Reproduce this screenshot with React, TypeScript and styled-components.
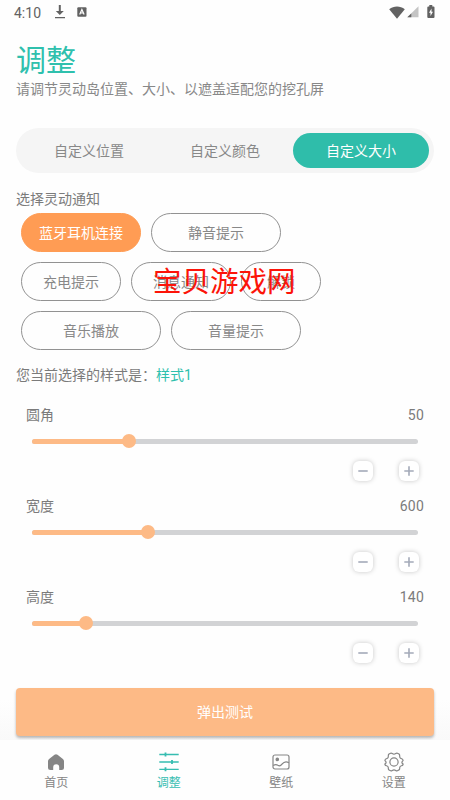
import React from "react";
import styled, { createGlobalStyle } from "styled-components";

const GlobalStyle = createGlobalStyle`
  * { box-sizing: border-box; }
  body { margin: 0; background: #fefefe; }
  button { font: inherit; border: 0; padding: 0; margin: 0; }
`;

const Screen = styled.main`
  width: 450px;
  height: 800px;
  overflow: hidden;
  display: flex;
  flex-direction: column;
  background: linear-gradient(#fefefe 700px, #f9f9f9 740px);
  color: #888;
  font: 14px/20px Roboto, "Noto Sans CJK SC", sans-serif;
`;

const StatusBar = styled.header`
  height: 26px;
  flex: none;
  display: flex;
  align-items: center;
  padding: 0 15px 0 14px;
  color: #626262;
`;

const Clock = styled.span`
  width: 40px;
  font-size: 14px;
  line-height: 26px;
`;

const StatusIcons = styled.div<{ $end?: boolean }>`
  display: flex;
  align-items: center;
  gap: ${(p) => (p.$end ? "2px" : "11px")};
  padding-bottom: 2px;
  margin-left: ${(p) => (p.$end ? "auto" : "0")};
`;

const BatterySlot = styled.span`
  display: flex;
  margin-left: 6px;
`;

const Content = styled.section`
  flex: 1;
  display: flex;
  flex-direction: column;
  padding: 0 16px;
`;

const Title = styled.h1`
  margin: 15px 0 0;
  height: 38px;
  color: #2fc0ad;
  font-size: 30px;
  line-height: 40px;
  font-weight: 400;
`;

const Subtitle = styled.p`
  margin: 0;
  height: 20px;
  white-space: nowrap;
`;

const Tabs = styled.div`
  display: grid;
  grid-template-columns: repeat(3, 1fr);
  height: 45px;
  margin-top: 29px;
  padding: 5px;
  border-radius: 23px;
  background: #f5f5f5;
`;

const Tab = styled.button<{ $active?: boolean }>`
  border-radius: 18px;
  color: ${(p) => (p.$active ? "#fff" : "#888")};
  background: ${(p) => (p.$active ? "#2fbdaa" : "transparent")};
`;

const Label = styled.p`
  margin: 16px 0 4px;
  color: #7b7b7b;
`;

const ChipArea = styled.div`
  position: relative;
  display: flex;
  flex-direction: column;
  gap: 10px;
  padding-left: 5px;
`;

const ChipRow = styled.div`
  display: flex;
  gap: 10px;
`;

const Chip = styled.button<{ $width: number; $active?: boolean }>`
  width: ${(p) => p.$width}px;
  height: 39px;
  border-radius: 20px;
  border: 1px solid ${(p) => (p.$active ? "#ff9c54" : "#929292")};
  background: ${(p) => (p.$active ? "#ff9c54" : "transparent")};
  color: ${(p) => (p.$active ? "#fff" : "#888")};
`;

const Watermark = styled.span`
  position: absolute;
  left: 137px;
  top: 49px;
  color: #fc1409;
  font-size: 28.5px;
  line-height: 42px;
  white-space: nowrap;
`;

const StyleLine = styled.p`
  margin: 15px 0 20px;
  color: #7b7b7b;
`;

const Accent = styled.span`
  color: #2fc0ad;
`;

const Setting = styled.div`
  height: 91px;
  padding: 0 10px;
`;

const SettingHead = styled.div`
  display: flex;
  justify-content: space-between;
  color: #7b7b7b;
`;

const SettingValue = styled.span`
  letter-spacing: 0.2px;
`;

const Track = styled.div`
  display: flex;
  align-items: center;
  height: 5px;
  margin: 13.5px 6px 0;
  border-radius: 3px;
  background: #d2d3d5;
`;

const Fill = styled.div`
  height: 5px;
  border-radius: 3px;
  background: #fdba86;
`;

const Thumb = styled.div`
  width: 14px;
  height: 14px;
  flex: none;
  margin-left: -7px;
  border-radius: 50%;
  background: #fdba86;
`;

const Steppers = styled.div`
  display: flex;
  justify-content: flex-end;
  gap: 26px;
  margin-top: 17.5px;
  padding-right: 5px;
`;

const Stepper = styled.button`
  display: grid;
  place-items: center;
  width: 20px;
  height: 20px;
  border-radius: 6px;
  background: #fff;
  box-shadow: 0 0 5px rgba(0, 0, 0, 0.22);
`;

const TestButton = styled.button`
  height: 48px;
  margin-top: 10px;
  border-radius: 4px;
  background: #fdba86;
  color: #fff;
  box-shadow: 0 2px 3px rgba(0, 0, 0, 0.28);
`;

const BottomNav = styled.nav`
  height: 60px;
  flex: none;
  display: grid;
  grid-template-columns: repeat(4, 1fr);
  background: #fefefe;
`;

const NavItem = styled.a<{ $active?: boolean }>`
  display: flex;
  flex-direction: column;
  align-items: center;
  gap: 2px;
  padding-top: 12px;
  font-size: 12px;
  line-height: 18px;
  color: ${(p) => (p.$active ? "#36bdb1" : "#858585")};
`;

const DownloadIcon = () => (
  <svg width="12" height="14" viewBox="0 0 12 14" fill="currentColor">
    <path d="M4.8 0h2v6h3L5.8 10 1.8 6h3zM1 12h10v1.2H1z" />
  </svg>
);

const LetterBadgeIcon = () => (
  <svg width="10" height="10" viewBox="0 0 10 10">
    <rect x=".3" y=".3" width="9.2" height="9.4" rx="1" fill="currentColor" />
    <path d="M2.7 7.5 4.9 2.5 7.1 7.5M3.4 6h3" fill="none" stroke="#fff" strokeWidth="1.2" />
  </svg>
);

const WifiIcon = () => (
  <svg width="16" height="13" viewBox="0 0 16 13" fill="currentColor">
    <path d="M.2 3.2C4.8-.4 11.2-.4 15.8 3.2L8 12.7z" />
  </svg>
);

const SignalIcon = () => (
  <svg width="12" height="12" viewBox="0 0 12 12">
    <path d="M11.5.3v11H.3z" fill="#c4c4c4" />
    <path d="M4.3 7.4v3.9H.3z" fill="currentColor" />
  </svg>
);

const BatteryIcon = () => (
  <svg width="8" height="14" viewBox="0 0 8 14">
    <path d="M2.3 0h3v1.4h1.2q1 0 1 1v9.6q0 1-1 1H1.3q-1 0-1-1V2.4q0-1 1-1h1z" fill="currentColor" />
    <path d="M4.5 3.5 2 7.7h1.5v3.3L6 6.7H4.5z" fill="#fff" />
  </svg>
);

const HomeIcon = () => (
  <svg width="20" height="20" viewBox="0 0 20 20">
    <path d="M8.5 2.7q1.500-1 3 0l5.400 4.200q1.100.9 1.100 2.300v6.300q0 2.500-2.500 2.500h-2.300v-2.800a3 3 0 0 0-6 0V18H4.500Q2 18 2 15.500V9.200q0-1.400 1.100-2.300z" fill="#858585" />
  </svg>
);

const AdjustIcon = () => (
  <svg width="20" height="20" viewBox="0 0 20 20" fill="none" stroke="currentColor" strokeWidth="1.3">
    <path d="M.3 2.5h19.400M.3 10h19.400M.3 17.300h19.400" />
    <path d="M6.500.5v4M13 8v4M6.500 15.300v4" strokeWidth="1.8" />
  </svg>
);

const PictureIcon = () => (
  <svg width="20" height="20" viewBox="0 0 20 20" fill="none" stroke="currentColor" strokeWidth="1.2">
    <rect x="2" y="3" width="16" height="14" rx="2" />
    <circle cx="6.3" cy="7.4" r="1.2" fill="currentColor" />
    <path d="M2.2 13.500c2-1.300 3.300-1.200 4.700-.2 2 1.300 2.900.5 4.100-1.100 2-2.600 3.900-3.200 6.900-1.400" />
  </svg>
);

const GearIcon = () => (
  <svg width="20" height="20" viewBox="0 0 20 20" fill="none" stroke="currentColor" strokeWidth="1.2">
    <path d="M10 2.200C11.700 2.200 12 .6 13.400 1.200L15 2.100C16.300 3 15.200 4.100 16 5.600 16.900 7.100 18.300 6.400 18.900 7.700 19.700 9.100 17.900 9 17.900 10.400 17.900 11.800 19.700 11.500 18.900 12.900 18.200 14.200 16.900 13.300 16 14.700 15.200 16 16.300 17.200 15 17.900L13.400 18.800C12 19.400 11.700 17.800 10 17.800S8 19.400 6.600 18.800L5 17.900C3.700 17.200 4.800 16 4 14.700 3.100 13.300 1.800 14.200 1.100 12.900.3 11.500 2.100 11.800 2.100 10.400 2.100 9 .3 9.100 1.100 7.700 1.700 6.400 3.100 7.100 4 5.600 4.800 4.100 3.700 3 5 2.100L6.600 1.200C8 .6 8.300 2.200 10 2.200z" />
    <circle cx="10" cy="10" r="4.100" />
  </svg>
);

const SignIcon = ({ plus }: { plus?: boolean }) => (
  <svg width="12" height="12" viewBox="0 0 12 12" fill="none" stroke="#a4aab9" strokeWidth="1.6">
    <path d={plus ? "M1.300 6h9.400M6 1.300v9.400" : "M1.300 6h9.400"} />
  </svg>
);

const chipRows = [
  [{ text: "蓝牙耳机连接", width: 120, active: true }, { text: "静音提示", width: 130 }],
  [{ text: "充电提示", width: 100 }, { text: "消息通知", width: 100 }, { text: "解锁", width: 80 }],
  [{ text: "音乐播放", width: 140 }, { text: "音量提示", width: 130 }],
];

const settings = [
  { name: "圆角", value: 50, percent: 25 },
  { name: "宽度", value: 600, percent: 30 },
  { name: "高度", value: 140, percent: 14 },
];

export default function App() {
  return (
    <>
      <GlobalStyle />
      <Screen>
        <StatusBar>
          <Clock>4:10</Clock>
          <StatusIcons>
            <DownloadIcon />
            <LetterBadgeIcon />
          </StatusIcons>
          <StatusIcons $end>
            <WifiIcon />
            <SignalIcon />
            <BatterySlot>
              <BatteryIcon />
            </BatterySlot>
          </StatusIcons>
        </StatusBar>
        <Content>
          <Title>调整</Title>
          <Subtitle>请调节灵动岛位置、大小、以遮盖适配您的挖孔屏</Subtitle>
          <Tabs>
            <Tab>自定义位置</Tab>
            <Tab>自定义颜色</Tab>
            <Tab $active>自定义大小</Tab>
          </Tabs>
          <Label>选择灵动通知</Label>
          <ChipArea>
            {chipRows.map((row, i) => (
              <ChipRow key={i}>
                {row.map((c) => (
                  <Chip key={c.text} $width={c.width} $active={c.active}>
                    {c.text}
                  </Chip>
                ))}
              </ChipRow>
            ))}
            <Watermark>宝贝游戏网</Watermark>
          </ChipArea>
          <StyleLine>
            您当前选择的样式是：<Accent>样式1</Accent>
          </StyleLine>
          {settings.map((s) => (
            <Setting key={s.name}>
              <SettingHead>
                <span>{s.name}</span>
                <SettingValue>{s.value}</SettingValue>
              </SettingHead>
              <Track>
                <Fill style={{ width: `${s.percent}%` }} />
                <Thumb />
              </Track>
              <Steppers>
                <Stepper><SignIcon /></Stepper>
                <Stepper><SignIcon plus /></Stepper>
              </Steppers>
            </Setting>
          ))}
          <TestButton>弹出测试</TestButton>
        </Content>
        <BottomNav>
          <NavItem><HomeIcon />首页</NavItem>
          <NavItem $active><AdjustIcon />调整</NavItem>
          <NavItem><PictureIcon />壁纸</NavItem>
          <NavItem><GearIcon />设置</NavItem>
        </BottomNav>
      </Screen>
    </>
  );
}
